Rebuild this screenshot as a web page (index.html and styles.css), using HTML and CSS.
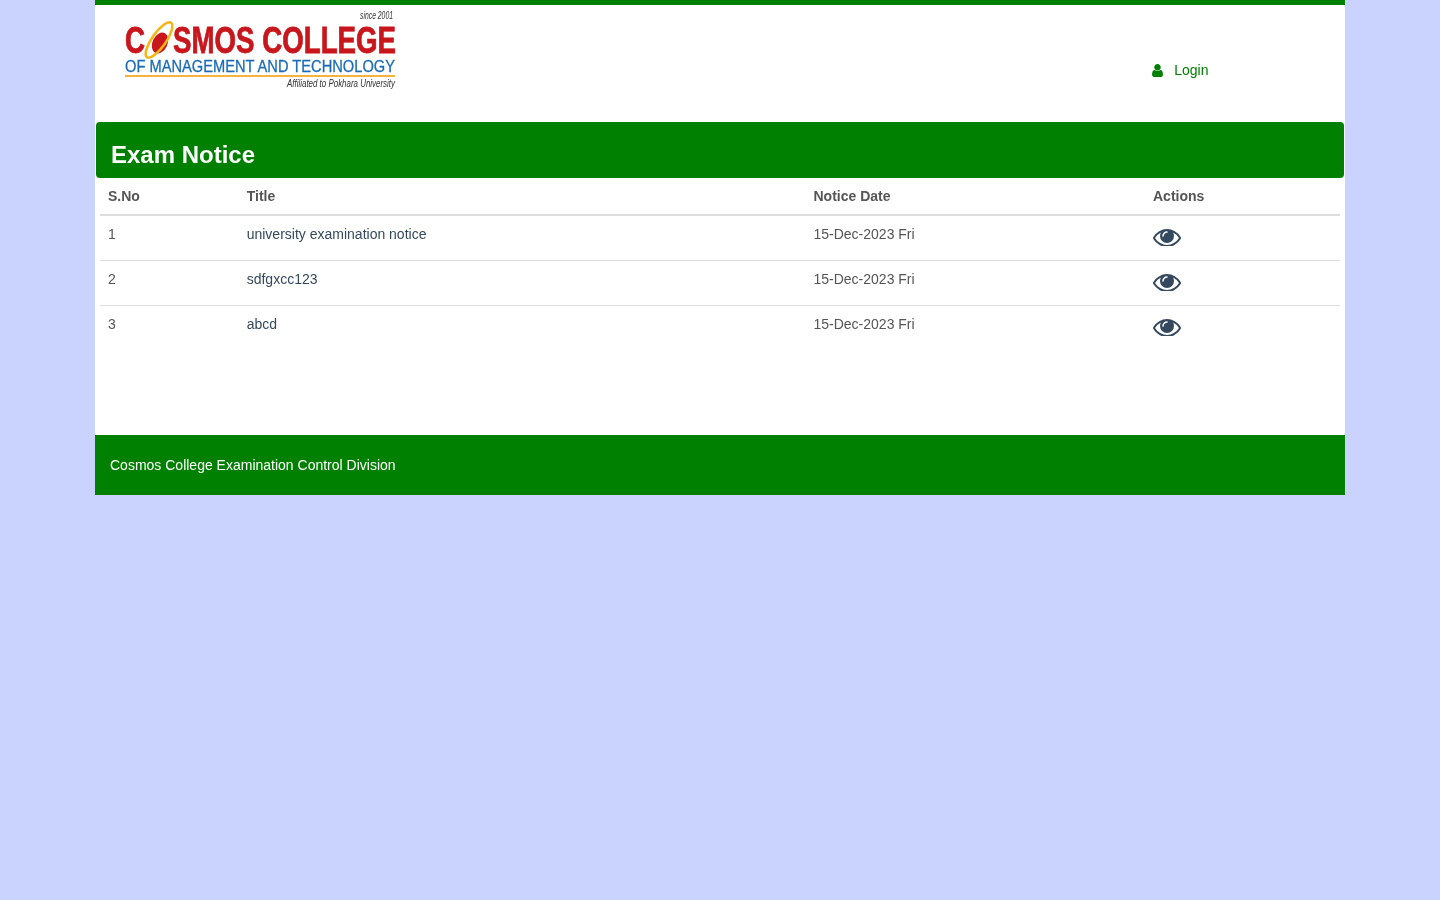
FILE: index.html
```html
<!DOCTYPE html>
<html lang="en">
<head>
  <meta charset="UTF-8" />
  <meta name="viewport" content="width=device-width, initial-scale=1" />
  <title>Exam Notice - Cosmos College</title>
  <link rel="stylesheet" href="styles.css">
</head>
<body>
  <svg class="icon-defs" width="0" height="0">
    <symbol id="eye" viewBox="0 320 1792 1152">
      <path d="M1664 960q-152-236-381-353 61 104 61 225 0 185-131.500 316.500t-316.500 131.500-316.500-131.500-131.500-316.500q0-121 61-225-229 117-381 353 133 205 333.500 326.500t434.500 121.500 434.500-121.500 333.500-326.500zm-720-384q0-20-14-34t-34-14q-125 0-214.500 89.500t-89.500 214.500q0 20 14 34t34 14 34-14 14-34q0-86 61-147t147-61q20 0 34-14t14-34zm848 384q0 34-20 69-140 230-376.500 368.500t-499.500 138.500-499.500-139-376.500-368q-20-35-20-69t20-69q140-229 376.500-368t499.500-139 499.500 139 376.500 368q20 35 20 69z"/>
    </symbol>
  </svg>

  <div class="wrapper">
    <header class="top">
      <a class="logo" href="#">
        <svg class="logo-img" width="280" height="88" viewBox="0 0 280 88">
          <text class="logo-since" x="268" y="14" text-anchor="end" textLength="33" lengthAdjust="spacingAndGlyphs">since 2001</text>
          <text class="logo-name" x="0" y="48" textLength="20" lengthAdjust="spacingAndGlyphs">C</text>
          <text class="logo-name" x="48" y="48" textLength="223" lengthAdjust="spacingAndGlyphs">SMOS COLLEGE</text>
          <ellipse class="logo-globe" cx="35" cy="38" rx="7.500" ry="11" transform="rotate(25 35 38)"/>
          <ellipse class="logo-ring" cx="34" cy="35" rx="7" ry="21" transform="rotate(35 34 35)"/>
          <text class="logo-sub" x="0" y="67" textLength="270" lengthAdjust="spacingAndGlyphs">OF MANAGEMENT AND TECHNOLOGY</text>
          <rect class="logo-rule" x="0" y="70" width="270" height="2"/>
          <text class="logo-aff" x="270" y="82" text-anchor="end" textLength="108" lengthAdjust="spacingAndGlyphs">Affiliated to Pokhara University</text>
        </svg>
      </a>
      <a class="login" href="#">
        <svg class="login-icon" width="11" height="13" viewBox="256 128 1280 1536"><path d="M1536 1399q0 109-62.500 187t-150.500 78h-854q-88 0-150.500-78t-62.500-187q0-85 8.500-160.500t31.500-152 58.500-131 94-89 134.500-34.500q131 128 313 128t313-128q76 0 134.500 34.500t94 89 58.500 131 31.500 152 8.500 160.500zm-256-887q0 159-112.500 271.500t-271.500 112.500-271.500-112.500-112.500-271.500 112.500-271.500 271.500-112.500 271.500 112.500 112.500 271.500z"/></svg>
        Login
      </a>
    </header>

    <section class="panel">
      <h2 class="panel-title">Exam Notice</h2>
      <table class="notice-table">
        <thead>
          <tr>
            <th class="col-no">S.No</th>
            <th class="col-title">Title</th>
            <th class="col-date">Notice Date</th>
            <th>Actions</th>
          </tr>
        </thead>
        <tbody>
          <tr>
            <td>1</td>
            <td><a href="#">university examination notice</a></td>
            <td>15-Dec-2023 Fri</td>
            <td><a class="view" href="#"><svg width="28" height="18"><use href="#eye"/></svg></a></td>
          </tr>
          <tr>
            <td>2</td>
            <td><a href="#">sdfgxcc123</a></td>
            <td>15-Dec-2023 Fri</td>
            <td><a class="view" href="#"><svg width="28" height="18"><use href="#eye"/></svg></a></td>
          </tr>
          <tr>
            <td>3</td>
            <td><a href="#">abcd</a></td>
            <td>15-Dec-2023 Fri</td>
            <td><a class="view" href="#"><svg width="28" height="18"><use href="#eye"/></svg></a></td>
          </tr>
        </tbody>
      </table>
    </section>

    <footer class="bottom">Cosmos College Examination Control Division</footer>
  </div>
</body>
</html>
```

FILE: styles.css
```css
body {
  font-family: "Liberation Sans", Arial, sans-serif;
  font-size: 14px;
  line-height: 20px;
  background-color: #cad2fe;
  color: #555;
  margin: 0;
  padding: 0;
}

a {
  text-decoration: none;
}

.icon-defs {
  position: absolute;
}

.wrapper {
  width: 1250px;
  margin: 0 auto;
  background: white;
  border-top: 5px solid #008000;
  will-change: transform;
}

.top {
  height: 117px;
  display: flex;
  justify-content: space-between;
  padding: 0 136.500px 0 30px;
}

.logo {
  display: block;
  height: 88px;
}

.logo-img {
  overflow: visible;
}

.logo-since {
  font-family: "Liberation Sans Narrow", "Liberation Sans", sans-serif;
  font-size: 10px;
  font-style: italic;
  fill: #333;
}

.logo-name {
  font-family: "Liberation Sans Narrow", "Liberation Sans", sans-serif;
  font-size: 36px;
  font-weight: bold;
  fill: #c8161d;
  stroke: #c8161d;
  stroke-width: 0.800;
}

.logo-globe {
  fill: #c8161d;
}

.logo-ring {
  fill: none;
  stroke: #f7b512;
  stroke-width: 2.500;
}

.logo-sub {
  font-family: "Liberation Sans Narrow", "Liberation Sans", sans-serif;
  font-size: 17px;
  fill: #1b6cb5;
  stroke: #1b6cb5;
  stroke-width: 0.300;
}

.logo-rule {
  fill: #f7b33d;
}

.logo-aff {
  font-family: "Liberation Sans Narrow", "Liberation Sans", sans-serif;
  font-size: 11px;
  font-style: italic;
  fill: #333;
}

.login {
  color: #008000;
  margin-top: 55px;
  height: 20px;
  display: flex;
  align-items: center;
  gap: 11px;
}

.login-icon {
  fill: #008000;
}

.panel {
  height: 313px;
  padding: 0 1px;
  box-sizing: border-box;
}

.panel-title {
  background-color: #008000;
  color: white;
  font-size: 24px;
  line-height: 26px;
  font-weight: bold;
  margin: 0;
  padding: 20px 15px 10px;
  border-radius: 4px;
}

.notice-table {
  width: 1240px;
  margin: 0 4px;
  border-collapse: collapse;
  table-layout: fixed;
}

.notice-table th {
  text-align: left;
  padding: 8px;
  line-height: 20px;
  border-bottom: 2px solid #ddd;
}

.notice-table td {
  padding: 8px;
  height: 45px;
  box-sizing: border-box;
  vertical-align: top;
  border-top: 1px solid #ddd;
}

.notice-table tbody tr:first-child td {
  border-top: none;
}

.notice-table td a {
  color: #34495e;
}

.col-no {
  width: 122.700px;
}

.col-title {
  width: 550.800px;
}

.col-date {
  width: 323.500px;
}

.view {
  display: block;
  height: 18px;
  margin-top: 4px;
}

.view svg {
  display: block;
  fill: #34495e;
}

.bottom {
  background-color: #008000;
  color: white;
  height: 60px;
  line-height: 60px;
  padding-left: 15px;
}
```
